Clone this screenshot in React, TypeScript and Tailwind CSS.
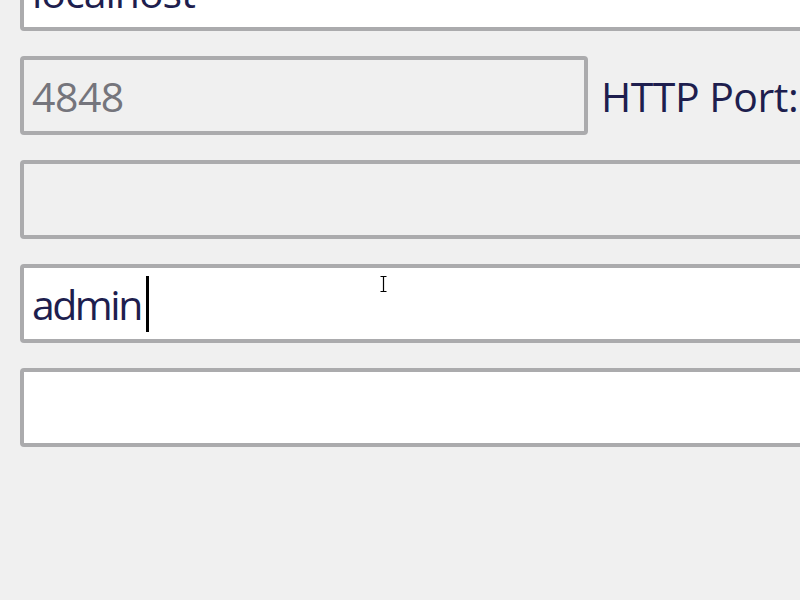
import React from "react";

const font = { fontFamily: '"Open Sans", "Noto Sans", sans-serif' };

function Box({
  children,
  white = true,
  width = "w-[830px]",
}: {
  children?: React.ReactNode;
  white?: boolean;
  width?: string;
}) {
  return (
    <div
      className={`${width} h-[79px] shrink-0 border-4 border-[#ababad] rounded-[4px] ${
        white ? "bg-white" : "bg-[#f0f0f0]"
      } flex items-center pl-[8px] relative`}
    >
      {children}
    </div>
  );
}

export default function App() {
  return (
    <div
      className="w-[800px] h-[600px] overflow-hidden bg-[#f0f0f0] relative"
      style={font}
    >
      <div className="flex flex-col gap-[25px] mt-[-48px] pl-[20px]">
        <Box>
          <span className="text-[41px] font-medium leading-none text-[#1e1e4e] tracking-[-1px] mt-[2px]">
            localhost
          </span>
        </Box>
        <div className="flex items-center">
          <Box white={false} width="w-[568px]">
            <span className="text-[41px] font-medium leading-none text-[#75757c] tracking-[-0.5px] mt-[2px]">
              4848
            </span>
          </Box>
          <span className="ml-[13px] text-[41px] font-medium leading-none text-[#1e1e4e] whitespace-nowrap tracking-[-0.5px] mt-[2px]">
            HTTP Port:
          </span>
        </div>
        <Box white={false} />
        <Box>
          <span className="text-[41px] font-medium leading-none text-[#1e1e4e] tracking-[-2.5px] mt-[2px]">
            admin
          </span>
          <span className="w-[3px] h-[56px] bg-black ml-[5px]" />
          <svg
            className="absolute left-[355px] top-[7px]"
            width="10"
            height="18"
            viewBox="0 0 10 18"
          >
            <path d="M1.5 1.5h6M4.5 1.5v15M1.5 16.5h6" stroke="#000" strokeWidth="1.2" fill="none" />
          </svg>
        </Box>
        <Box />
      </div>
    </div>
  );
}
